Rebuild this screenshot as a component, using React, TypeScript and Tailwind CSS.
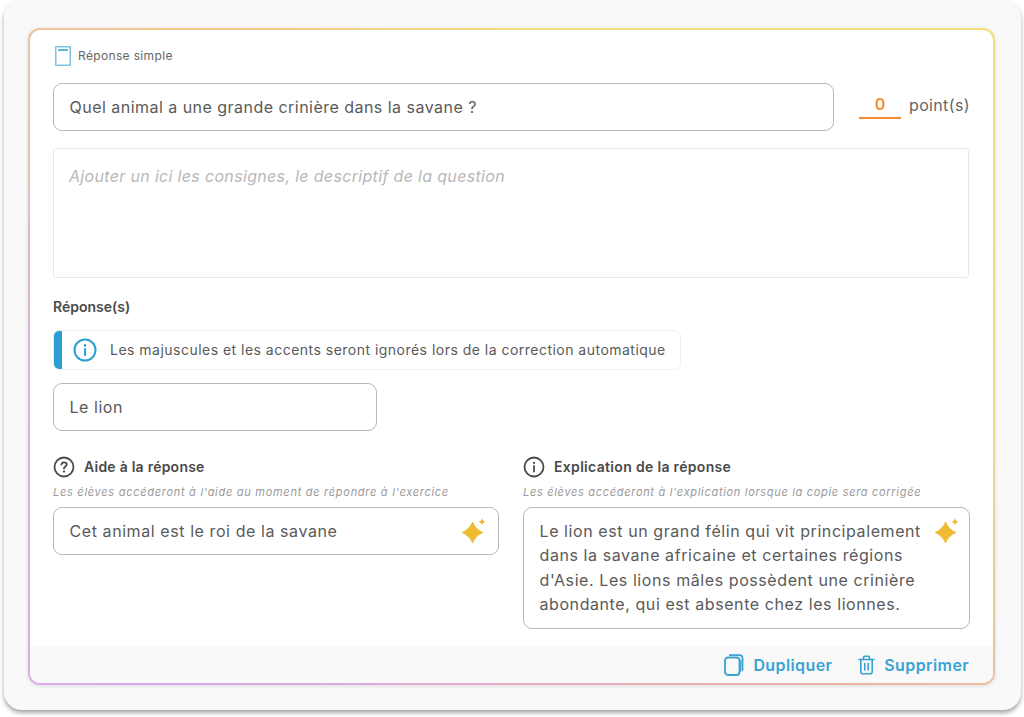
import React from "react";

const font = "font-['Inter','Open_Sans',sans-serif]";

function Sparkle() {
  return (
    <svg width="24" height="25" viewBox="0 0 24 25" className="shrink-0">
      <path d="M10.500 4Q13.500 11.500 21 14.500Q13.500 17.500 10.500 25Q7.500 17.500 0 14.500Q7.500 11.500 10.500 4Z" fill="#eebb33" stroke="#eebb33" strokeWidth="0.800" strokeLinejoin="round" />
      <path d="M20 0.500Q20.700 3 23.500 3.800Q20.700 4.600 20 7Q19.300 4.600 16.500 3.800Q19.300 3 20 0.500Z" fill="#eebb33" />
    </svg>
  );
}

function CircleIcon({ mark }: { mark: "?" | "i" }) {
  return (
    <svg width="22" height="22" viewBox="0 0 22 22" fill="none" stroke="#4a4a4a" strokeWidth="1.800" strokeLinecap="round" className="shrink-0">
      <circle cx="11" cy="11" r="9.500" />
      {mark === "i" ? (
        <>
          <path d="M11 10v5.500" />
          <path d="M11 6.800v.2" strokeWidth="2.200" />
        </>
      ) : (
        <>
          <path d="M8.400 8.600c.2-1.500 1.300-2.300 2.700-2.300 1.500 0 2.600 .9 2.600 2.200 0 1.900-2.700 2-2.700 4" />
          <path d="M11 15.500v.1" strokeWidth="2.200" />
        </>
      )}
    </svg>
  );
}

function App() {
  return (
    <div className={`w-[1024px] h-[717px] bg-white overflow-hidden text-[#5a5a5a] ${font}`}>
      <div className="ml-[4px] mr-[3px] h-[710px] bg-[#f9f9f9] rounded-[18px] shadow-[0_3px_4px_rgba(0,0,0,0.35)] pt-[28px] pl-[24px] pr-[26px]">
        <div className="h-[657px] rounded-[12px] p-[2px] bg-[conic-gradient(from_0deg,#f5dc7c_0deg,#f5dc7c_70deg,#f0d890_100deg,#e8b4a8_135deg,#e6b0c0_170deg,#dca8ec_225deg,#e4b0dc_270deg,#efc98a_315deg,#f5dc7c_360deg)] shadow-[0_1px_4px_rgba(0,0,0,0.12)]">
          <div className="h-full bg-white rounded-[10px] overflow-hidden flex flex-col">
            <div className="flex-1 px-[23px] pt-[15.500px]">
              <div className="flex items-center h-[20px] ml-[2px] gap-[7px]">
                <svg width="16" height="20" viewBox="0 0 16 20" fill="none" className="shrink-0">
                  <rect x="0.750" y="0.750" width="14.500" height="18.500" fill="#fff" stroke="#7cc4e2" strokeWidth="1.500" />
                  <path d="M3 4h10" stroke="#2b9fcf" strokeWidth="1.500" />
                </svg>
                <span className="text-[12px] text-[#666666] tracking-[0.35px] pt-[1px]">Réponse simple</span>
              </div>
              <div className="mt-[17px] flex items-center">
                <div className="w-[781px] h-[48px] border border-[#b8b8b8] rounded-[9px] flex items-center pl-[15.500px] text-[16px] tracking-[0.47px]">
                  Quel animal a une grande crinière dans la savane ?
                </div>
                <div className="ml-[25px] w-[42px] h-[28px] mb-[4px] border-b-2 border-[#f58a2e] text-[#f58a2e] text-[16px] font-semibold flex items-center justify-center">
                  0
                </div>
                <div className="ml-[8px] mb-[4px] text-[16px] text-[#666666] tracking-[0.35px]">point(s)</div>
              </div>
              <div className="mt-[17px] w-[916px] h-[130px] border border-[#e9e9e9] rounded-[3px] pl-[15px] pt-[15px] text-[16px] italic text-[#b8b8b8] tracking-[0.33px] leading-[24px]">
                Ajouter un ici les consignes, le descriptif de la question
              </div>
              <div className="mt-[20px] text-[14px] leading-[18px] font-semibold text-[#4a4a4a]">Réponse(s)</div>
              <div className="mt-[14px] w-[628px] h-[40px] flex rounded-[6px] border border-[#e6f2fa] overflow-hidden">
                <div className="w-[8px] bg-[#2b9fcf] shrink-0" />
                <div className="flex items-center pl-[12px] gap-[12px]">
                  <svg width="24" height="24" viewBox="0 0 24 24" fill="none" stroke="#2b9fcf" strokeWidth="2" strokeLinecap="round" className="shrink-0 ml-[-1px]">
                    <circle cx="12" cy="12" r="10.500" />
                    <path d="M12 11v6" />
                    <path d="M12 7.300v.2" strokeWidth="2.400" />
                  </svg>
                  <span className="text-[14px] text-[#5a5a5a] tracking-[0.48px] whitespace-nowrap ml-[1px]">
                    Les majuscules et les accents seront ignorés lors de la correction automatique
                  </span>
                </div>
              </div>
              <div className="mt-[13px] w-[324px] h-[48px] border border-[#b8b8b8] rounded-[9px] flex items-center pl-[15.500px] text-[16px] tracking-[0.55px]">
                Le lion
              </div>
              <div className="mt-[26px] grid grid-cols-[446px_447px] gap-[24px]">
                <div>
                  <div className="flex items-center gap-[9px] h-[20px]">
                    <CircleIcon mark="?" />
                    <span className="text-[14px] font-semibold text-[#4a4a4a] tracking-[0.24px]">Aide à la réponse</span>
                  </div>
                  <div className="mt-[7px] text-[11px] leading-[16px] italic text-[#9a9a9a] tracking-[0.72px] whitespace-nowrap">
                    Les élèves accéderont à l'aide au moment de répondre à l'exercice
                  </div>
                  <div className="mt-[7px] h-[48px] border border-[#b8b8b8] rounded-[9px] flex items-center justify-between pl-[15.500px] pr-[12px] text-[16px] tracking-[0.58px]">
                    Cet animal est le roi de la savane
                    <Sparkle />
                  </div>
                </div>
                <div>
                  <div className="flex items-center gap-[9px] h-[20px]">
                    <CircleIcon mark="i" />
                    <span className="text-[14px] font-semibold text-[#4a4a4a] tracking-[0.32px]">Explication de la réponse</span>
                  </div>
                  <div className="mt-[7px] text-[11px] leading-[16px] italic text-[#9a9a9a] tracking-[0.69px] whitespace-nowrap">
                    Les élèves accéderont à l'explication lorsque la copie sera corrigée
                  </div>
                  <div className="mt-[7px] h-[122px] border border-[#b8b8b8] rounded-[9px] relative pl-[15.500px] pt-[11px] text-[16px] leading-[24.500px] tracking-[0.58px] whitespace-nowrap">
                    Le lion est un grand félin qui vit principalement
                    <br />
                    dans la savane africaine et certaines régions
                    <br />
                    d'Asie. Les lions mâles possèdent une crinière
                    <br />
                    abondante, qui est absente chez les lionnes.
                    <div className="absolute right-[10px] top-[10px]">
                      <Sparkle />
                    </div>
                  </div>
                </div>
              </div>
            </div>
            <div className="h-[37px] bg-[#f9f9f9] flex items-center justify-end pr-[24px] text-[#3aa3d1] text-[16px] font-semibold tracking-[0.4px]">
              <div className="flex items-center gap-[9px]">
                <svg width="20" height="22" viewBox="0 0 20 22" fill="none" stroke="#3aa3d1" strokeWidth="1.800" strokeLinejoin="round">
                  <rect x="1" y="3.500" width="14.500" height="17.500" rx="3" />
                  <path d="M5 1.200h10.500a3 3 0 0 1 3 3v12.500" />
                  <path d="M16.700 18v-12" strokeWidth="1.200" />
                </svg>
                Dupliquer
              </div>
              <div className="flex items-center gap-[9px] ml-[26px]">
                <svg width="17" height="20" viewBox="0 0 17 20" fill="none" stroke="#3aa3d1" strokeWidth="1.600" strokeLinecap="round" strokeLinejoin="round">
                  <path d="M1 4.500h15" />
                  <path d="M5.500 4.500V2.500a1.300 1.300 0 0 1 1.300-1.300h3.400a1.300 1.300 0 0 1 1.300 1.300v2" />
                  <path d="M2.800 4.500v12.300a2 2 0 0 0 2 2h7.400a2 2 0 0 0 2-2V4.500" />
                  <path d="M6.800 8.500v6.500" />
                  <path d="M10.200 8.500v6.500" />
                </svg>
                Supprimer
              </div>
            </div>
          </div>
        </div>
      </div>
    </div>
  );
}

export default App;
